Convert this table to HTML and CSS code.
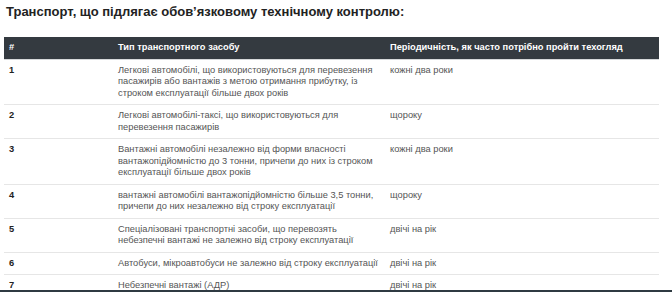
FILE: index.html
```html
<!DOCTYPE html>
<html lang="uk">
<head>
<meta charset="utf-8">
<link rel="stylesheet" href="styles.css">
</head>
<body>
<h2 class="title">Транспорт, що підлягає обов’язковому технічному контролю:</h2>
<table class="tbl">
  <thead>
    <tr><th class="c1">#</th><th class="c2">Тип транспортного засобу</th><th class="c3">Періодичність, як часто потрібно пройти техогляд</th></tr>
  </thead>
  <tbody>
    <tr><th>1</th><td>Легкові автомобілі, що використовуються для перевезення пасажирів або вантажів з метою отримання прибутку, із строком експлуатації більше двох років</td><td>кожні два роки</td></tr>
    <tr><th>2</th><td>Легкові автомобілі-таксі, що використовуються для перевезення пасажирів</td><td>щороку</td></tr>
    <tr><th>3</th><td>Вантажні автомобілі незалежно від форми власності вантажопідйомністю до 3 тонни, причепи до них із строком експлуатації більше двох років</td><td>кожні два роки</td></tr>
    <tr><th>4</th><td>вантажні автомобілі вантажопідйомністю більше 3,5 тонни, причепи до них незалежно від строку експлуатації</td><td>щороку</td></tr>
    <tr><th>5</th><td>Спеціалізовані транспортні засоби, що перевозять небезпечні вантажі не залежно від строку експлуатації</td><td>двічі на рік</td></tr>
    <tr><th>6</th><td>Автобуси, мікроавтобуси не залежно від строку експлуатації</td><td>двічі на рік</td></tr>
    <tr><th>7</th><td>Небезпечні вантажі (АДР)</td><td>двічі на рік</td></tr>
  </tbody>
</table>
<div class="bottombar"></div>
</body>
</html>
```

FILE: styles.css
```css
html, body {
  margin: 0;
  padding: 0;
  background: #fff;
}
body {
  font-family: "Liberation Sans", Arial, sans-serif;
  color: #212529;
  padding: 0 13px 0 4px;
}
.title {
  margin: 0;
  padding: 3px 0 0 2px;
  font-size: 13px;
  line-height: 17px;
  font-weight: bold;
  color: #222;
}
.tbl {
  margin-top: 17px;
  width: 655px;
  border-collapse: collapse;
  font-size: 9.3px;
  line-height: 11.5px;
}
.tbl th, .tbl td {
  text-align: left;
  vertical-align: top;
  padding: 5px;
  border-top: 1px solid #e6e6e6;
}
.tbl tbody th {
  font-weight: bold;
  color: #222;
}
.tbl td {
  color: #555;
}
.tbl thead th {
  background: #343a40;
  color: #fff;
  font-weight: bold;
  border: none;
  border-bottom: 1px solid #d6d8da;
  padding: 5px;
  height: 11px;
}
.c1 { width: 99px; }
.c2 { width: 262px; }
.bottombar {
  position: fixed;
  left: 0;
  right: 0;
  bottom: 0;
  height: 2px;
  background: #2f3a42;
}
```
